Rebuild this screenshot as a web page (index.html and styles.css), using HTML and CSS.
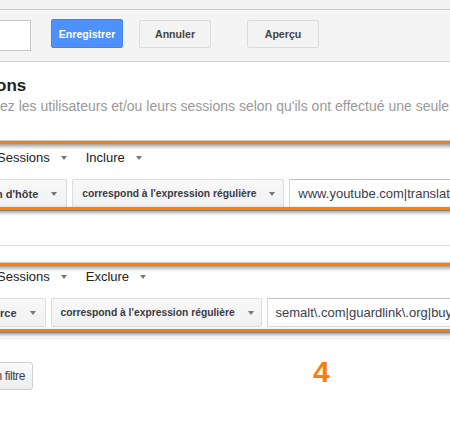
FILE: index.html
```html
<!DOCTYPE html>
<html lang="fr">
<head>
<meta charset="utf-8">
<title>Segment</title>
<link rel="stylesheet" href="styles.css">
</head>
<body>
<div class="page">
  <div class="topstrip"></div>
  <div class="toolbar">
    <div class="name-input"></div>
    <button class="btn btn-primary">Enregistrer</button>
    <button class="btn btn-cancel">Annuler</button>
    <button class="btn btn-preview">Aperçu</button>
  </div>

  <div class="intro">
    <h2 class="title">ons</h2>
    <p class="desc">ez les utilisateurs et/ou leurs sessions selon qu'ils ont effectué une seule ou plusieurs</p>
  </div>

  <div class="filter filter-first">
    <div class="filter-head">
      <span class="menu menu-scope">Sessions<i class="caret"></i></span>
      <span class="menu">Inclure<i class="caret"></i></span>
    </div>
    <div class="filter-row">
      <div class="drop drop-dim drop-dim-1"><span>n d'hôte</span><i class="caret"></i></div>
      <div class="drop drop-op"><span>correspond à l'expression régulière</span><i class="caret"></i></div>
      <div class="value">www.youtube.com|translate.google.com</div>
    </div>
  </div>

  <div class="separator"></div>

  <div class="filter filter-second">
    <div class="filter-head">
      <span class="menu menu-scope">Sessions<i class="caret"></i></span>
      <span class="menu">Exclure<i class="caret"></i></span>
    </div>
    <div class="filter-row">
      <div class="drop drop-dim drop-dim-2"><span>rce</span><i class="caret"></i></div>
      <div class="drop drop-op"><span>correspond à l'expression régulière</span><i class="caret"></i></div>
      <div class="value">semalt\.com|guardlink\.org|buy-cheap-online\.info</div>
    </div>
  </div>

  <div class="footer">
    <button class="add-btn"><span>n filtre</span></button>
    <span class="step">4</span>
  </div>

  <div class="highlight highlight-1"></div>
  <div class="highlight highlight-2"></div>
</div>
</body>
</html>
```

FILE: styles.css
```css
html, body {
  margin: 0;
  padding: 0;
  background: #ffffff;
}

body {
  width: 450px;
  height: 426px;
  overflow: hidden;
  font-family: "Liberation Sans", Arial, sans-serif;
  color: #222;
}

.page {
  position: relative;
  width: 450px;
  height: 426px;
  overflow: hidden;
}

.topstrip {
  height: 9px;
  background: #f1f1f1;
  border-bottom: 1px solid #c9c9c9;
}

.toolbar {
  box-sizing: border-box;
  height: 52px;
  background: #f4f4f4;
  border-bottom: 1px solid #cfcfcf;
  display: flex;
  align-items: flex-start;
  padding-top: 10px;
}

.name-input {
  width: 31px;
  height: 31px;
  box-sizing: border-box;
  background: #fff;
  border: 1px solid #c6c6c6;
  border-left: none;
}

.btn {
  box-sizing: border-box;
  width: 72px;
  height: 28px;
  padding: 0;
  border-radius: 2px;
  font-family: "Liberation Sans", Arial, sans-serif;
  font-size: 10.6px;
  font-weight: bold;
  color: #444;
  background: #f3f3f3;
  border: 1px solid #dcdcdc;
}

.btn-primary {
  margin-left: 20px;
  margin-top: -1px;
  height: 29px;
  background: #4d90fe;
  border-color: #3f86f5;
  color: #fff;
}

.btn-cancel {
  margin-left: 16px;
}

.btn-preview {
  margin-left: 36px;
}

.intro {
  padding-top: 14px;
}

.title {
  margin: 0 0 0 -4px;
  font-size: 17px;
  line-height: 20px;
  font-weight: bold;
  color: #222;
}

.desc {
  margin: 2px 0 0;
  font-size: 14px;
  line-height: 16px;
  color: #999;
  white-space: nowrap;
}

.filter {
  width: 640px;
}

.filter-first {
  margin-top: 35px;
}

.filter-second {
  margin-top: 22px;
}

.filter-head {
  display: flex;
  align-items: center;
  height: 18px;
  font-size: 13px;
  line-height: 18px;
  color: #222;
}

.menu {
  display: inline-flex;
  align-items: center;
}

.menu-scope {
  margin-left: -3px;
  margin-right: 19px;
}

.menu .caret {
  margin-left: 11px;
}

.caret {
  display: inline-block;
  width: 0;
  height: 0;
  border-left: 3.5px solid transparent;
  border-right: 3.5px solid transparent;
  border-top: 4px solid #777;
}

.filter-row {
  display: flex;
  gap: 5px;
  margin-top: 12px;
  height: 29px;
}

.drop {
  box-sizing: border-box;
  height: 29px;
  display: flex;
  align-items: center;
  padding: 0 9px;
  background: linear-gradient(#f8f8f8, #f1f1f1);
  border: 1px solid #dcdcdc;
  border-radius: 2px;
  font-size: 10.3px;
  font-weight: bold;
  color: #3a3a44;
  white-space: nowrap;
}

.drop .caret {
  margin-left: 13px;
}

.drop-dim {
  border-left: none;
  border-radius: 0 2px 2px 0;
  font-size: 11px;
}

.drop-dim-1 {
  margin-left: -4px;
  padding-left: 0;
}

.drop-dim-2 {
  padding-left: 0;
}

.drop-op {
  width: 212px;
  justify-content: space-between;
  padding-right: 10px;
}

.filter-second .drop-op {
  width: 211px;
}

.value {
  box-sizing: border-box;
  flex: 1;
  height: 29px;
  padding: 0 8px;
  display: flex;
  align-items: center;
  border: 1px solid #d9d9d9;
  border-top-color: #c0c0c0;
  background: #fff;
  font-size: 13px;
  color: #3c3c4a;
  white-space: nowrap;
  overflow: hidden;
}

.separator {
  margin-top: 37px;
  height: 0;
  border-top: 1px solid #dedede;
}

.footer {
  margin-top: 11px;
  border-top: 1px solid #f0f0f0;
  display: flex;
  align-items: flex-start;
  padding-top: 23px;
}

.add-btn {
  box-sizing: border-box;
  width: 41px;
  height: 28px;
  margin-left: -8px;
  padding: 0 7px 0 0;
  display: flex;
  align-items: center;
  justify-content: flex-end;
  background: linear-gradient(#fafafa, #eeeeee);
  border: 1px solid #cfcfcf;
  border-radius: 3px;
  font-family: "Liberation Sans", Arial, sans-serif;
  font-size: 12px;
  letter-spacing: -0.4px;
  color: #3a3f55;
  white-space: nowrap;
  overflow: hidden;
}

.step {
  margin-left: 280px;
  margin-top: -5px;
  font-size: 30px;
  line-height: 30px;
  font-weight: bold;
  color: #fb7d0c;
}

.highlight {
  position: absolute;
  left: -10px;
  width: 470px;
  height: 69px;
  box-sizing: border-box;
  border: 3px solid #fd7f08;
  box-shadow: 0 0 0 1px rgba(0, 0, 0, 0.15), 0 2px 4px rgba(0, 0, 0, 0.5), inset 0 2px 4px rgba(0, 0, 0, 0.45);
}

.highlight-1 {
  top: 141px;
}

.highlight-2 {
  top: 263px;
}
```
